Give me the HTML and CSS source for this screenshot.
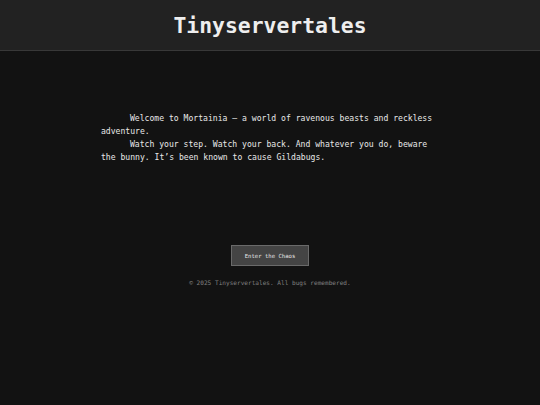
FILE: index.html
```html
<!DOCTYPE html>
<html lang="en">
<head>
<meta charset="utf-8">
<title>Tinyservertales</title>
<link rel="stylesheet" href="styles.css">
</head>
<body>
<header class="site-header">
  <h1 class="site-title">Tinyservertales</h1>
</header>
<main class="content">
  <section class="intro">
    <p class="intro-line">Welcome to Mortainia — a world of ravenous beasts and reckless adventure.</p>
    <p class="intro-line">Watch your step. Watch your back. And whatever you do, beware the bunny. It’s been known to cause Gildabugs.</p>
  </section>
  <a class="enter-btn" href="#">Enter the Chaos</a>
  <footer class="site-footer">© 2025 Tinyservertales. All bugs remembered.</footer>
</main>
</body>
</html>
```
FILE: styles.css
```css
html, body {
  margin: 0;
  padding: 0;
  background: #121212;
  color: #e6e6e6;
  font-family: "DejaVu Sans Mono", "Liberation Mono", monospace;
}
body {
  min-height: 405px;
}
.site-header {
  height: 50px;
  background: #222222;
  border-bottom: 1px solid #383838;
  display: flex;
  align-items: center;
  justify-content: center;
}
.site-title {
  margin: 0;
  font-size: 21.4px;
  font-weight: bold;
  color: #eeeeee;
  line-height: 1;
  padding-top: 1px;
}
.content {
  display: flex;
  flex-direction: column;
  align-items: center;
  padding-top: 61px;
}
.intro {
  width: 338px;
  font-size: 8.1px;
  line-height: 13px;
  color: #e8e8e8;
}
.intro-line {
  margin: 0;
  text-indent: 29px;
}
.enter-btn {
  margin-top: 81px;
  width: 76px;
  height: 19px;
  display: flex;
  align-items: center;
  justify-content: center;
  background: #444444;
  border: 1px solid #6a6a6a;
  color: #e6e6e6;
  font-size: 5.6px;
  text-decoration: none;
}
.site-footer {
  margin-top: 13px;
  font-size: 6.1px;
  color: #808080;
}
```
